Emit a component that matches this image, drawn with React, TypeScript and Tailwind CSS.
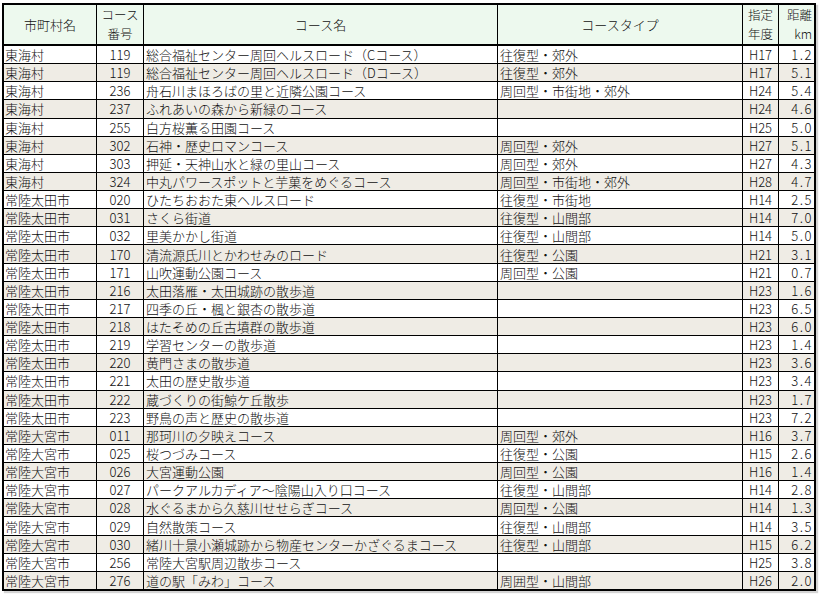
import React from "react";

type Row = [string, string, string, string, string, string];

const rows: Row[] = [
  ["東海村", "119", "総合福祉センター周回ヘルスロード（Cコース）", "往復型・郊外", "H17", "1.2"],
  ["東海村", "119", "総合福祉センター周回ヘルスロード（Dコース）", "往復型・郊外", "H17", "5.1"],
  ["東海村", "236", "舟石川まほろばの里と近隣公園コース", "周回型・市街地・郊外", "H24", "5.4"],
  ["東海村", "237", "ふれあいの森から新緑のコース", "", "H24", "4.6"],
  ["東海村", "255", "白方桜薫る田園コース", "", "H25", "5.0"],
  ["東海村", "302", "石神・歴史ロマンコース", "周回型・郊外", "H27", "5.1"],
  ["東海村", "303", "押延・天神山水と緑の里山コース", "周回型・郊外", "H27", "4.3"],
  ["東海村", "324", "中丸パワースポットと芋菓をめぐるコース", "周回型・市街地・郊外", "H28", "4.7"],
  ["常陸太田市", "020", "ひたちおおた東ヘルスロード", "往復型・市街地", "H14", "2.5"],
  ["常陸太田市", "031", "さくら街道", "往復型・山間部", "H14", "7.0"],
  ["常陸太田市", "032", "里美かかし街道", "往復型・山間部", "H14", "5.0"],
  ["常陸太田市", "170", "清流源氏川とかわせみのロード", "往復型・公園", "H21", "3.1"],
  ["常陸太田市", "171", "山吹運動公園コース", "周回型・公園", "H21", "0.7"],
  ["常陸太田市", "216", "太田落雁・太田城跡の散歩道", "", "H23", "1.6"],
  ["常陸太田市", "217", "四季の丘・楓と銀杏の散歩道", "", "H23", "6.5"],
  ["常陸太田市", "218", "はたそめの丘古墳群の散歩道", "", "H23", "6.0"],
  ["常陸太田市", "219", "学習センターの散歩道", "", "H23", "1.4"],
  ["常陸太田市", "220", "黄門さまの散歩道", "", "H23", "3.6"],
  ["常陸太田市", "221", "太田の歴史散歩道", "", "H23", "3.4"],
  ["常陸太田市", "222", "蔵づくりの街鯨ケ丘散歩", "", "H23", "1.7"],
  ["常陸太田市", "223", "野鳥の声と歴史の散歩道", "", "H23", "7.2"],
  ["常陸大宮市", "011", "那珂川の夕映えコース", "周回型・郊外", "H16", "3.7"],
  ["常陸大宮市", "025", "桜つづみコース", "往復型・公園", "H15", "2.6"],
  ["常陸大宮市", "026", "大宮運動公園", "周回型・公園", "H16", "1.4"],
  ["常陸大宮市", "027", "パークアルカディア～陰陽山入り口コース", "往復型・山間部", "H14", "2.8"],
  ["常陸大宮市", "028", "水ぐるまから久慈川せせらぎコース", "周回型・公園", "H14", "1.3"],
  ["常陸大宮市", "029", "自然散策コース", "往復型・山間部", "H14", "3.5"],
  ["常陸大宮市", "030", "緒川十景小瀬城跡から物産センターかざぐるまコース", "往復型・山間部", "H15", "6.2"],
  ["常陸大宮市", "256", "常陸大宮駅周辺散歩コース", "", "H25", "3.8"],
  ["常陸大宮市", "276", "道の駅「みわ」コース", "周囲型・山間部", "H26", "2.0"],
];

const cols = "grid grid-cols-[92px_46px_353px_244px_35px_35px] gap-x-px";

export default function App() {
  return (
    <div
      className="w-[823px] h-[596px] bg-white text-[#111] overflow-hidden font-light"
      style={{ fontFamily: '"Noto Sans CJK JP", "Noto Sans", sans-serif' }}
    >
      <div className="ml-[2px] mt-[3px] w-[814px] border-2 border-black bg-black flex flex-col shadow-[2px_2px_1px_#d4d4d4]">
        <div className={`${cols} h-[39px] text-[13px]`}>
          <div className="bg-[#edf9ee] flex items-center justify-center">市町村名</div>
          <div className="bg-[#edf9ee] flex flex-col items-center justify-center text-[12.5px] leading-[18.5px]">
            <span>コース</span>
            <span>番号</span>
          </div>
          <div className="bg-[#edf9ee] flex items-center justify-center">コース名</div>
          <div className="bg-[#edf9ee] flex items-center justify-center">コースタイプ</div>
          <div className="bg-[#edf9ee] flex flex-col items-center justify-center text-[12.5px] leading-[18.5px]">
            <span>指定</span>
            <span>年度</span>
          </div>
          <div className="bg-[#edf9ee] flex flex-col items-end justify-center pr-[2px] text-[12.5px] leading-[18.5px]">
            <span>距離</span>
            <span>km</span>
          </div>
        </div>
        <div className="mt-[2px] h-[543px] grid grid-rows-[repeat(30,1fr)] gap-y-px text-[13px] leading-none">
          {rows.map((r, i) => {
            const bg = i % 2 === 0 ? "bg-white" : "bg-[#efece5]";
            return (
              <div key={i} className={cols}>
                <div className={`${bg} flex items-center pl-[1px] whitespace-nowrap`}>{r[0]}</div>
                <div className={`${bg} flex items-center justify-center`}>{r[1]}</div>
                <div className={`${bg} flex items-center pl-[2px] whitespace-nowrap overflow-hidden`}>{r[2]}</div>
                <div className={`${bg} flex items-center pl-[2px] whitespace-nowrap`}>{r[3]}</div>
                <div className={`${bg} flex items-center justify-center`}>{r[4]}</div>
                <div className={`${bg} flex items-center justify-end pr-[1px] tracking-[1.5px]`}>{r[5]}</div>
              </div>
            );
          })}
        </div>
      </div>
    </div>
  );
}
